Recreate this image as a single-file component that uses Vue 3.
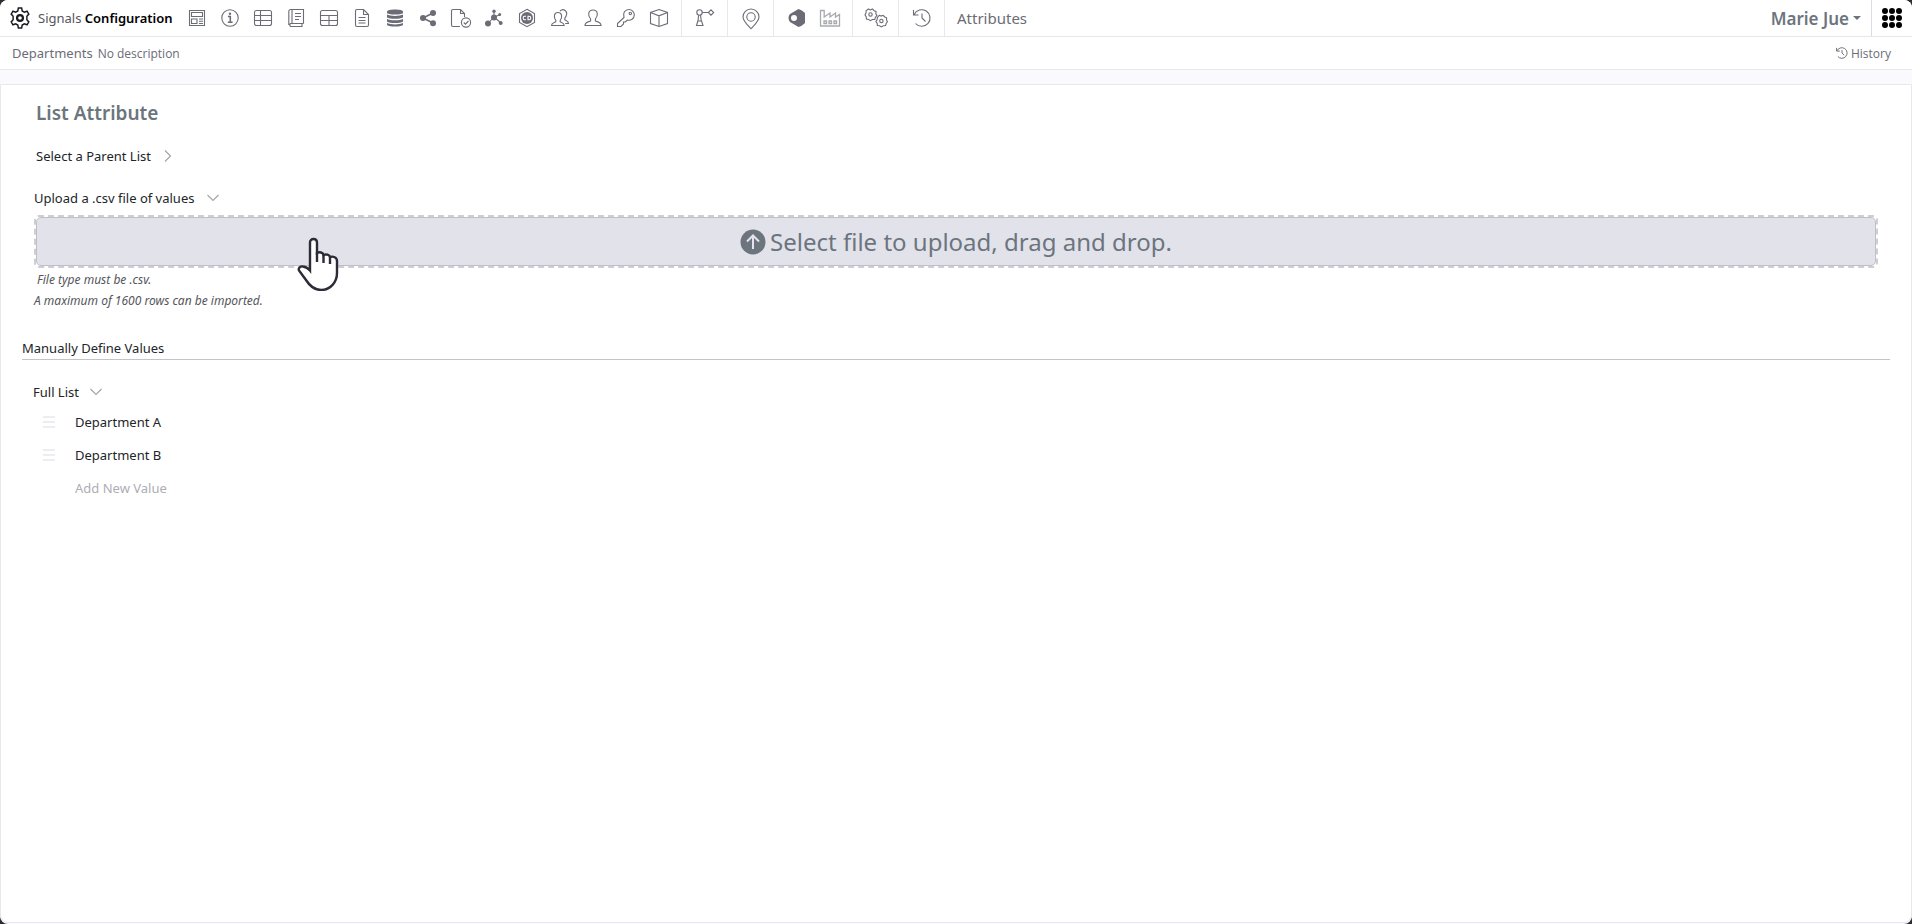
<template>
    <div class="app">
        <header class="topbar">
            <a class="brand" href="#">
                <svg class="gear" viewBox="0 0 24 24" aria-hidden="true">
                    <path
                        d="M10.2 1.2h3.6l.6 3.1 2.3 1.3 3-1 1.9 3.1-2.1 2.3v3.9l2.1 2.4-1.9 3.1-3-1.1-2.3 1.4-.6 3.1h-3.6l-.6-3.1-2.3-1.4-3 1.1-1.9-3.1 2.1-2.4V10L2.4 7.7l1.9-3.1 3 1 2.3-1.3z"
                    />
                    <circle cx="12" cy="12" r="3.2" />
                </svg>
                <span>Signals <strong>Configuration</strong></span>
            </a>
            <nav class="tools" aria-label="Configuration sections">
                <div v-for="(group, i) in toolGroups" :key="i" class="tool-group">
                    <button
                        v-for="tool in group"
                        :key="tool.name"
                        type="button"
                        class="tool"
                        :class="{ faded: tool.faded }"
                        :aria-label="tool.name"
                    >
                        <svg viewBox="0 0 22 22" v-html="tool.icon"></svg>
                    </button>
                </div>
            </nav>
            <span class="section-name">Attributes</span>
            <button type="button" class="user">Marie Jue <span class="caret"></span></button>
            <button type="button" class="apps" aria-label="Applications">
                <span v-for="n in 9" :key="n" class="dot"></span>
            </button>
        </header>

        <div class="subbar">
            <span class="attr-name">Departments</span>
            <span class="attr-desc">No description</span>
            <button type="button" class="history">
                <svg viewBox="0 0 22 22" v-html="historyIcon"></svg>
                History
            </button>
        </div>

        <main class="card">
            <h1>List Attribute</h1>

            <button type="button" class="toggle parent" @click="parentOpen = !parentOpen">
                Select a Parent List
                <svg class="chevron" :class="{ open: parentOpen }" viewBox="0 0 14 14"><path d="M4 1.5 9.5 7 4 12.5" /></svg>
            </button>

            <button type="button" class="toggle upload" @click="uploadOpen = !uploadOpen">
                Upload a .csv file of values
                <svg class="chevron" :class="{ open: uploadOpen }" viewBox="0 0 14 14"><path d="M4 1.5 9.5 7 4 12.5" /></svg>
            </button>
            <div v-if="uploadOpen">
                <div class="dropzone">
                    <button type="button" class="drop-button">
                        <svg viewBox="0 0 26 26" aria-hidden="true">
                            <circle cx="13" cy="13" r="12.5" fill="#6c757d" />
                            <path d="M13 20V6.500M7 12.500l6-6 6 6" fill="none" stroke="#e4e4ec" stroke-width="2" />
                        </svg>
                        Select file to upload, drag and drop.
                    </button>
                    <svg class="pointer" viewBox="0 0 42 54" aria-hidden="true">
                        <path
                            d="M13 30V5.500C13 .8 20 .8 20 5.500V16c2.500-1.500 6-.5 6.500 2 2.500-1.200 5.800-.2 6.500 2 3-1 7 .3 7 4v12c0 9-6.500 17-16 17-7 0-11.500-4.500-15-10L2 33.500c-1-2.500 1.500-4.500 4-4 3 .5 5 1.500 7 4z"
                        />
                        <path d="M20 15v10M26.500 18v8M33 20v7" />
                    </svg>
                </div>
                <p class="note indent">File type must be .csv.</p>
                <p class="note">A maximum of 1600 rows can be imported.</p>
            </div>

            <h2>Manually Define Values</h2>

            <button type="button" class="toggle full" @click="listOpen = !listOpen">
                Full List
                <svg class="chevron" :class="{ open: listOpen }" viewBox="0 0 14 14"><path d="M4 1.5 9.5 7 4 12.5" /></svg>
            </button>
            <ul v-if="listOpen" class="values">
                <li v-for="(value, i) in values" :key="i">
                    <span class="handle"><i></i><i></i><i></i></span>
                    <input v-model="values[i]" type="text" :aria-label="`Value ${i + 1}`" />
                </li>
                <li>
                    <span class="handle"></span>
                    <input v-model="newValue" type="text" placeholder="Add New Value" aria-label="Add New Value" />
                </li>
            </ul>
        </main>
    </div>
</template>

<script setup>
    import { ref } from 'vue'

    const parentOpen = ref(false)
    const uploadOpen = ref(true)
    const listOpen = ref(true)
    const values = ref(['Department A', 'Department B'])
    const newValue = ref('')

    const historyIcon =
        '<path d="M3.2 7.500A8.300 8.300 0 1 1 4.500 16.500M2.500 3v5h5M11 6.500V11l3.500 3.500"/>'

    const toolGroups = [
        [
            {
                name: 'Templates',
                icon: '<path d="M3.500 3.500h15v15h-15zM5.500 5.500h11v4h-11zM5.500 12h5.500v4.500H5.500zM13 12h4M13 14.300h4M13 16.500h4"/>',
            },
            {
                name: 'Information',
                icon: '<circle cx="11" cy="11" r="8.2"/><path stroke-width="1.6" d="M9 9.500h2.300V15M8.800 15.200h4.800"/><circle cx="11" cy="6.7" r="1.2" fill="currentColor" stroke="none"/>',
            },
            {
                name: 'Tables',
                icon: '<rect x="2.5" y="3.5" width="17" height="15" rx="2"/><path d="M2.500 8.500h17M2.500 13.500h17M8.500 3.500v15"/>',
            },
            {
                name: 'Notebooks',
                icon: '<path d="M18.500 16.500H5.500a2 2 0 0 0 0 3h11.500v-3M3.800 18V4.500a2 2 0 0 1 2-2h12.700v14M7 2.500v14M10 6.500h6M10 9.500h6M10 12.500h4"/>',
            },
            {
                name: 'Grids',
                icon: '<rect x="2.5" y="3.5" width="17" height="15" rx="2"/><path d="M2.500 8.500h17M2.500 13.500h17M11 8.500v10"/>',
            },
            {
                name: 'Documents',
                icon: '<path d="M4.500 4a1.500 1.500 0 0 1 1.500-1.500h6.500l5 5V18a1.500 1.500 0 0 1-1.500 1.500H6A1.500 1.500 0 0 1 4.500 18zM12.500 2.500v5h5M7.500 10.500h7M7.500 13.500h7M7.500 16h7"/>',
            },
            {
                name: 'Database',
                icon: '<g fill="currentColor" stroke="none"><path d="M3 4.500C3 1.800 19 1.800 19 4.500v1.800c-3 1.700-13 1.700-16 0z"/><path d="M3 7.600c3 1.700 13 1.700 16 0v2.900c-3 1.700-13 1.700-16 0z"/><path d="M3 11.900c3 1.700 13 1.700 16 0v2.900c-3 1.700-13 1.700-16 0z"/><path d="M3 16.100c3 1.700 13 1.700 16 0v1.400c0 2.700-16 2.700-16 0z"/></g>',
            },
            {
                name: 'Sharing',
                icon: '<path stroke-width="1.6" d="M16 6 6 11l10 5"/><g fill="currentColor" stroke="none"><circle cx="16" cy="6" r="3"/><circle cx="6" cy="11" r="3"/><circle cx="16" cy="16.3" r="3"/></g>',
            },
            {
                name: 'Approvals',
                icon: '<path d="M10 19.500H3a1.500 1.500 0 0 1-1.500-1.500V4A1.500 1.500 0 0 1 3 2.500h7.500l4 4V10M10.500 2.500v4h4"/><circle cx="16" cy="15.5" r="4.6"/><path d="m13.800 15.500 1.700 1.700 3-3.200"/>',
            },
            {
                name: 'Materials',
                icon: '<path d="M11 10 5 16.500M11 10l6.500 5.500M11 10V4M11 10l5.500-2"/><g fill="currentColor" stroke="none"><circle cx="11" cy="10.5" r="3"/><circle cx="5" cy="16.5" r="3"/><circle cx="17.7" cy="16" r="2"/><circle cx="11" cy="4.2" r="1.7"/><circle cx="16.7" cy="7.5" r="1.5"/></g>',
            },
            {
                name: 'ChemDraw',
                icon: '<path d="m11 2.300 7.500 4.300v8.800L11 19.700l-7.500-4.300V6.600z"/><circle cx="11" cy="11" r="6" fill="currentColor" stroke="none"/><path stroke="#fff" d="M10 9.200H8.500Q7.200 9.200 7.200 11t1.300 1.800H10M12 9.200h1q1.800 0 1.800 1.800T13 12.800h-1z"/>',
            },
            {
                name: 'Groups',
                icon: '<path d="M6.800 13.300C4.500 10.500 4.800 5.500 9 5.500s4.500 5 2.200 7.800v1.500c1.500 1 4 1 4 3.700H2.500c0-2.700 2.800-2.700 4.300-3.700z"/><path d="M11 4c3.500-3.300 8 .5 6.300 4.500-.3 1.200-1 2-1.500 2.700v1.600c1.500 1 3.700 1 3.700 3.700h-3.300"/>',
            },
            {
                name: 'Users',
                icon: '<path d="M8.600 12C5.500 8.500 6 3 11 3s5.500 5.500 2.400 9v2c2 1 5.600.8 5.600 4.500H3c0-3.700 3.600-3.500 5.600-4.500z"/>',
            },
            {
                name: 'Permissions',
                icon: '<path d="M9 10.500C7.500 6 10 2.500 14 2.500a5.300 5.300 0 0 1 5.300 5.300c0 4-3.500 6-7 5.200l-2 2H8.500v2L6 19.500H2.500v-3z"/><circle cx="15.3" cy="6.5" r="1.2"/>',
            },
            {
                name: 'Inventory',
                icon: '<path d="m11 2.500 8.500 3v11l-8.500 3-8.500-3v-11zM2.500 5.500l8.500 3.300 8.500-3.300M11 8.800v10.700"/>',
            },
        ],
        [
            {
                name: 'Automation',
                icon: '<circle cx="5.500" cy="5.500" r="2.700"/><path d="m17 2.800 2.700 2.700L17 8.200l-2.700-2.700zM8.200 5.500h6M4.600 8.200 4 14M6.500 8.200l.8 5.800M3.800 14h3.800l1.400 4.500H2.500z"/>',
            },
        ],
        [
            {
                name: 'Locations',
                icon: '<path d="M11 21.700C7 17.500 3 14 3 10a8 8 0 0 1 16 0c0 4-4 7.500-8 11.700z"/><circle cx="11" cy="10" r="4.2"/>',
            },
        ],
        [
            {
                name: 'Plugins',
                icon: '<path fill="currentColor" stroke="none" fill-rule="evenodd" d="M12.500 2q3.500 1 6.500 4v10q-3 3-6.500 4L4 15Q2.500 13.500 2.500 11T4 7zM8 8a3 3 0 1 0 0 6 3 3 0 0 0 0-6z"/>',
            },
            {
                name: 'Plants',
                faded: true,
                icon: '<path stroke-width="1.3" d="M1.500 19V3.500h3.700V10l5.800-4v4l5.500-4v4l4-2.500V19zM5 14h2.500v2.500H5zM10 14h2.500v2.500H10zM15 14h2.500v2.500H15z"/>',
            },
        ],
        [
            {
                name: 'Settings',
                icon: '<path d="m3.500 1.900 1.900 1 2-1 1.700 1.800 1.900.7-.1 2.500 1 1.700-1.600 1.800-.5 2-2.400.1-1.900 1.200-1.900-1.200-2.200-.4-.2-2.300L0 8l1-1.900.1-2.400z"/><circle cx="5.500" cy="7.500" r="1.700"/><path d="m14.200 8.300 1.900.8 2-.8 1.700 1.700 1.800.8-.1 2.200.9 1.700-1.300 1.800-.5 2.100-2.300.2-1.900 1.100-1.800-1.100-2.200-.3-.3-2.200-1.200-1.800 1.200-1.800.2-2.100z"/><circle cx="16.400" cy="14" r="1.700"/>',
            },
        ],
        [{ name: 'History', icon: historyIcon }],
    ]
</script>

<style>
    body {
        margin: 0;
        background: #2d2b31;
    }
</style>

<style scoped>
    .app {
        display: flex;
        flex-direction: column;
        min-height: 100vh;
        box-sizing: border-box;
        padding-bottom: 1px;
        background: #faf9fe;
        border-radius: 8px;
        overflow: hidden;
        color: #212529;
        font-family: 'Noto Sans', 'Open Sans', sans-serif;
        font-size: 13px;
    }
    button,
    input {
        margin: 0;
        padding: 0;
        border: 0;
        background: none;
        color: inherit;
        font: inherit;
    }
    button {
        cursor: pointer;
    }
    svg {
        flex: none;
    }
    .topbar {
        display: flex;
        align-items: center;
        height: 36px;
        background: #fff;
        border-bottom: 1px solid #e9e7ee;
        color: #6b6c76;
    }
    .brand {
        display: flex;
        align-items: center;
        gap: 7px;
        width: 171px;
        padding-left: 9px;
        color: #55565c;
        text-decoration: none;
        white-space: nowrap;
    }
    .brand strong {
        color: #000;
        font-weight: 600;
    }
    .gear {
        width: 22px;
        height: 22px;
        fill: none;
        stroke: #1c1c20;
        stroke-width: 1.6;
    }
    .gear circle {
        stroke-width: 2.4;
    }
    .tools {
        display: flex;
        align-self: stretch;
    }
    .tool-group {
        display: flex;
        padding: 0 6px;
        border-right: 1px solid #e9e7ee;
    }
    .tool-group:first-child {
        padding-left: 0;
    }
    .tool {
        display: flex;
        align-items: center;
        justify-content: center;
        width: 33px;
    }
    .tool svg {
        width: 22px;
        height: 22px;
        fill: none;
        stroke: currentColor;
        stroke-width: 1.1;
        overflow: visible;
    }
    .faded {
        color: #a9aab0;
    }
    .section-name {
        padding-left: 12px;
        font-size: 15px;
    }
    .user {
        display: flex;
        align-items: center;
        gap: 4px;
        margin-left: auto;
        padding-right: 10px;
        color: #6c757d;
        font-size: 17px;
        font-weight: 600;
    }
    .caret {
        border: 4px solid transparent;
        border-top-color: currentColor;
        border-bottom: 0;
    }
    .apps {
        display: grid;
        grid-template-columns: repeat(3, 6px);
        gap: 1px;
        align-self: stretch;
        align-content: center;
        justify-content: center;
        width: 41px;
        border-left: 1px solid #dcdae3;
    }
    .dot {
        height: 6px;
        border-radius: 50%;
        background: #000;
    }
    .subbar {
        display: flex;
        align-items: center;
        gap: 5px;
        height: 32px;
        padding: 0 21px 0 12px;
        background: #fff;
        border-bottom: 1px solid #e9e7ee;
        color: #6b6c76;
        font-size: 13px;
    }
    .attr-desc,
    .history {
        font-family: 'Open Sans', 'Noto Sans', sans-serif;
        font-size: 12px;
    }
    .history {
        display: flex;
        align-items: center;
        gap: 2px;
        margin-left: auto;
    }
    .history svg {
        width: 14px;
        height: 14px;
        fill: none;
        stroke: currentColor;
        stroke-width: 1.5;
    }
    .card {
        flex: 1;
        margin-top: 14px;
        padding: 15px 21px 20px;
        background: #fff;
        border: 1px solid #e9e7ee;
        border-radius: 0 0 8px 8px;
    }
    h1 {
        margin: 0 14px;
        color: #6c757d;
        font-size: 19px;
        font-weight: 600;
        line-height: 26px;
    }
    .toggle {
        display: flex;
        align-items: center;
        gap: 10px;
        height: 24px;
    }
    .parent {
        margin: 18px 14px;
    }
    .upload {
        gap: 12px;
        margin: 0 12px 5px;
    }
    .full {
        margin: 20px 11px 1px;
    }
    .chevron {
        width: 14px;
        height: 14px;
        fill: none;
        stroke: #a5a5ad;
        stroke-width: 1.2;
    }
    .chevron.open {
        transform: rotate(90deg);
    }
    .dropzone {
        position: relative;
        margin: 0 12px 1px;
        border: 2px dashed #cfced6;
        border-radius: 4px;
    }
    .drop-button {
        display: flex;
        align-items: center;
        justify-content: center;
        gap: 4px;
        width: 100%;
        height: 49px;
        background: #e2e2eb;
        border: 1px solid #bfbfc6;
        border-radius: 5px;
        color: #6c757d;
        font-size: 24px;
    }
    .drop-button svg {
        width: 26px;
        height: 26px;
    }
    .pointer {
        position: absolute;
        top: 20px;
        left: 261px;
        width: 42px;
        height: 54px;
        fill: #fff;
        stroke: #2c2b36;
        stroke-width: 2.4;
        pointer-events: none;
    }
    .note {
        margin: 0 12px;
        color: #55565c;
        font-size: 12px;
        font-style: italic;
        line-height: 21px;
    }
    .note.indent {
        margin-left: 15px;
    }
    h2 {
        margin: 26px 0 0;
        border-bottom: 1px solid #c3c3c8;
        font-size: 13px;
        font-weight: 400;
        line-height: 22px;
    }
    .values {
        margin: 0;
        padding: 0 0 0 21px;
        list-style: none;
    }
    .values li {
        display: flex;
        align-items: center;
        gap: 20px;
        height: 33px;
    }
    .values input {
        flex: 1;
        outline: none;
    }
    .values input::placeholder {
        color: #adadb5;
        opacity: 1;
    }
    .handle {
        display: flex;
        flex-direction: column;
        gap: 3px;
        width: 12px;
    }
    .handle i {
        height: 2px;
        background: #eeecf1;
    }
</style>
